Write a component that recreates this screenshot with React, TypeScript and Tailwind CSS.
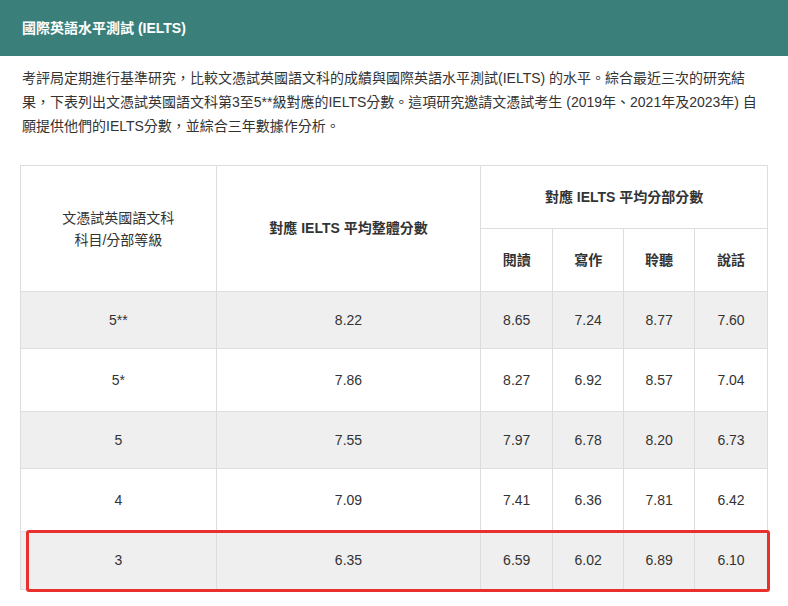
export default function App() {
  const rows = [
    ["5**", "8.22", "8.65", "7.24", "8.77", "7.60", 57],
    ["5*", "7.86", "8.27", "6.92", "8.57", "7.04", 63],
    ["5", "7.55", "7.97", "6.78", "8.20", "6.73", 57],
    ["4", "7.09", "7.41", "6.36", "7.81", "6.42", 63],
    ["3", "6.35", "6.59", "6.02", "6.89", "6.10", 58],
  ] as const

  return (
    <div className="w-[788px] h-[606px] overflow-hidden bg-white text-[#333] text-[14px]" style={{ fontFamily: '"Liberation Sans", "Noto Sans CJK TC", sans-serif' }}>
      <div className="h-[56px] bg-[#3b7f7b] flex items-center px-[22px] text-white font-bold text-[14px]">
        國際英語水平測試 (IELTS)
      </div>
      <p className="px-[22px] pt-[10px] leading-[24px] text-[14px] text-[#333]">
        考評局定期進行基準研究，比較文憑試英國語文科的成績與國際英語水平測試(IELTS) 的水平。綜合最近三次的研究結果，下表列出文憑試英國語文科第3至5**級對應的IELTS分數。這項研究邀請文憑試考生 (2019年、2021年及2023年) 自願提供他們的IELTS分數，並綜合三年數據作分析。
      </p>
      <div className="relative mt-[27px] ml-[20px] w-[748px]">
        <table className="w-full border-collapse text-center text-[14px]">
          <colgroup>
            <col className="w-[196px]" />
            <col className="w-[265px]" />
            <col className="w-[72px]" />
            <col className="w-[71px]" />
            <col className="w-[71px]" />
            <col className="w-[73px]" />
          </colgroup>
          <thead>
            <tr className="h-[63px]">
              <th rowSpan={2} className="border border-[#ddd] font-normal leading-[22px]">
                文憑試英國語文科<br />科目/分部等級
              </th>
              <th rowSpan={2} className="border border-[#ddd] font-semibold">對應 IELTS 平均整體分數</th>
              <th colSpan={4} className="border border-[#ddd] font-semibold">對應 IELTS 平均分部分數</th>
            </tr>
            <tr className="h-[63px]">
              {["閱讀", "寫作", "聆聽", "說話"].map(h => (
                <th key={h} className="border border-[#ddd] font-semibold">{h}</th>
              ))}
            </tr>
          </thead>
          <tbody>
            {rows.map((r, i) => (
              <tr key={i} className={i % 2 === 0 ? "bg-[#efefef]" : "bg-white"} style={{ height: r[6] }}>
                {r.slice(0, 6).map((c, j) => (
                  <td key={j} className="border border-[#ddd]">{c}</td>
                ))}
              </tr>
            ))}
          </tbody>
        </table>
        <div className="absolute left-[6px] right-[-2px] bottom-[-2px] h-[62px] border-[3px] border-[#e8302c] rounded-[3px]" />
      </div>
    </div>
  )
}
